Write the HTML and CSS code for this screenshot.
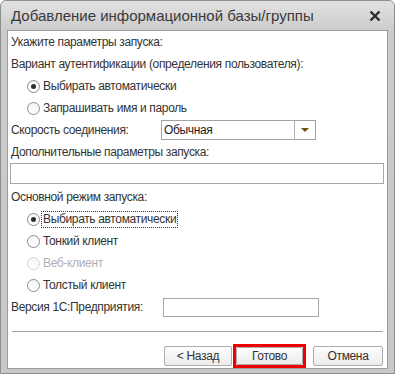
FILE: index.html
```html
<!DOCTYPE html>
<html lang="ru">
<head>
  <meta charset="UTF-8" />
  <title>Добавление информационной базы/группы</title>
  <link rel="stylesheet" href="styles.css">
</head>
<body>

  <div class="window">
    <div class="title-bar">
      <span class="title">Добавление информационной базы/группы</span>
      <span class="close">
        <svg width="12" height="12" viewBox="0 0 12 12">
          <path d="M1.5 1.5 L10.5 10.5 M10.5 1.5 L1.5 10.5" stroke="#2b2b2b" stroke-width="2.4" />
        </svg>
      </span>
    </div>

    <div class="client">
      <div class="row">Укажите параметры запуска:</div>
      <div class="row">Вариант аутентификации (определения пользователя):</div>
      <div class="row radio-row"><span class="radio checked"></span><span>Выбирать автоматически</span></div>
      <div class="row radio-row"><span class="radio"></span><span>Запрашивать имя и пароль</span></div>

      <div class="row field-row">
        <span class="label">Скорость соединения:</span>
        <div class="select">
          <span class="select-value">Обычная</span>
          <span class="select-btn"><span class="arrow"></span></span>
        </div>
      </div>

      <div class="row">Дополнительные параметры запуска:</div>
      <div class="wide-input"></div>

      <div class="row section">Основной режим запуска:</div>
      <div class="row radio-row"><span class="radio checked"></span><span class="focus">Выбирать автоматически</span></div>
      <div class="row radio-row"><span class="radio"></span><span>Тонкий клиент</span></div>
      <div class="row radio-row disabled"><span class="radio"></span><span>Веб-клиент</span></div>
      <div class="row radio-row"><span class="radio"></span><span>Толстый клиент</span></div>

      <div class="row field-row version">
        <span class="label">Версия 1С:Предприятия:</span>
        <div class="text-input"></div>
      </div>

      <div class="separator"></div>

      <div class="buttons">
        <button class="btn">&lt; Назад</button>
        <span class="highlight"><button class="btn">Готово</button></span>
        <button class="btn cancel">Отмена</button>
      </div>
    </div>
  </div>

</body>
</html>
```

FILE: styles.css
```css
body {
  margin: 0;
  background: #ffffff;
  font-family: "Liberation Sans", Arial, sans-serif;
  font-size: 12px;
  color: #333;
}

.window {
  width: 395px;
  height: 374px;
  box-sizing: border-box;
  border: 1px solid #8e8e8e;
  border-radius: 6px 6px 0 0;
  background: linear-gradient(#e2e2e2, #cbcbcb 30px, #c8c8c8);
  padding: 0 6px 6px;
  display: flex;
  flex-direction: column;
}

.title-bar {
  height: 29px;
  display: flex;
  align-items: center;
  justify-content: space-between;
  padding: 0 5px 0 4px;
  flex-shrink: 0;
}

.title {
  font-size: 15px;
  color: #3a3a3a;
}

.close {
  display: flex;
  margin-right: 2px;
}

.client {
  flex: 1;
  background: #fff;
  border: 1px solid #9c9c9c;
  padding: 0 3px;
  letter-spacing: -0.35px;
}

.row {
  height: 22px;
  line-height: 22px;
  white-space: nowrap;
}

.radio-row {
  display: flex;
  align-items: center;
  padding-left: 16px;
}

.radio {
  width: 11px;
  height: 11px;
  border: 1px solid #8c8c8c;
  border-radius: 50%;
  background: linear-gradient(#f4f4f4, #ffffff);
  margin-right: 3px;
  display: flex;
  align-items: center;
  justify-content: center;
}

.radio.checked::after {
  content: "";
  width: 5px;
  height: 5px;
  border-radius: 50%;
  background: #2e2e2e;
}

.disabled {
  color: #b0b0b0;
}

.disabled .radio {
  border-color: #d4d4d4;
}

.focus {
  outline: 1px dotted #333;
  line-height: 15px;
  padding: 0 1px;
  margin-left: -1px;
}

.field-row {
  display: flex;
  align-items: center;
}

.label {
  width: 150px;
}

.select {
  width: 155px;
  height: 20px;
  border: 1px solid #a3a3a3;
  display: flex;
  box-sizing: border-box;
}

.select-value {
  flex: 1;
  line-height: 18px;
  padding-left: 2px;
  color: #222;
}

.select-btn {
  width: 20px;
  border-left: 1px solid #b0b0b0;
  display: flex;
  align-items: center;
  justify-content: center;
}

.arrow {
  border-left: 4px solid transparent;
  border-right: 4px solid transparent;
  border-top: 4px solid #6d5212;
}

.wide-input {
  height: 19px;
  border: 1px solid #a8a8a8;
  margin: 0 0 2px -1px;
  width: 372px;
}

.section {
  margin-top: 1px;
}

.version .label {
  width: 152px;
}

.text-input {
  width: 154px;
  height: 17px;
  border: 1px solid #a8a8a8;
}

.separator {
  height: 1px;
  background: #a0a0a0;
  margin: 13px 1px 12px 1px;
}

.buttons {
  display: flex;
  justify-content: flex-end;
  align-items: center;
  padding-right: 1px;
}

.btn {
  font-family: "Liberation Sans", Arial, sans-serif;
  font-size: 12px;
  letter-spacing: -0.35px;
  color: #333;
  height: 20px;
  padding: 0;
  border: 1px solid #adadad;
  border-radius: 2px;
  background: linear-gradient(#fdfdfd, #ececec);
  width: 68px;
}

.highlight {
  display: flex;
  border: 3px solid #ee0000;
  margin-left: 1px;
}

.highlight .btn {
  width: 67px;
  height: 18px;
}

.cancel {
  width: 70px;
  margin-left: 7px;
}
```
